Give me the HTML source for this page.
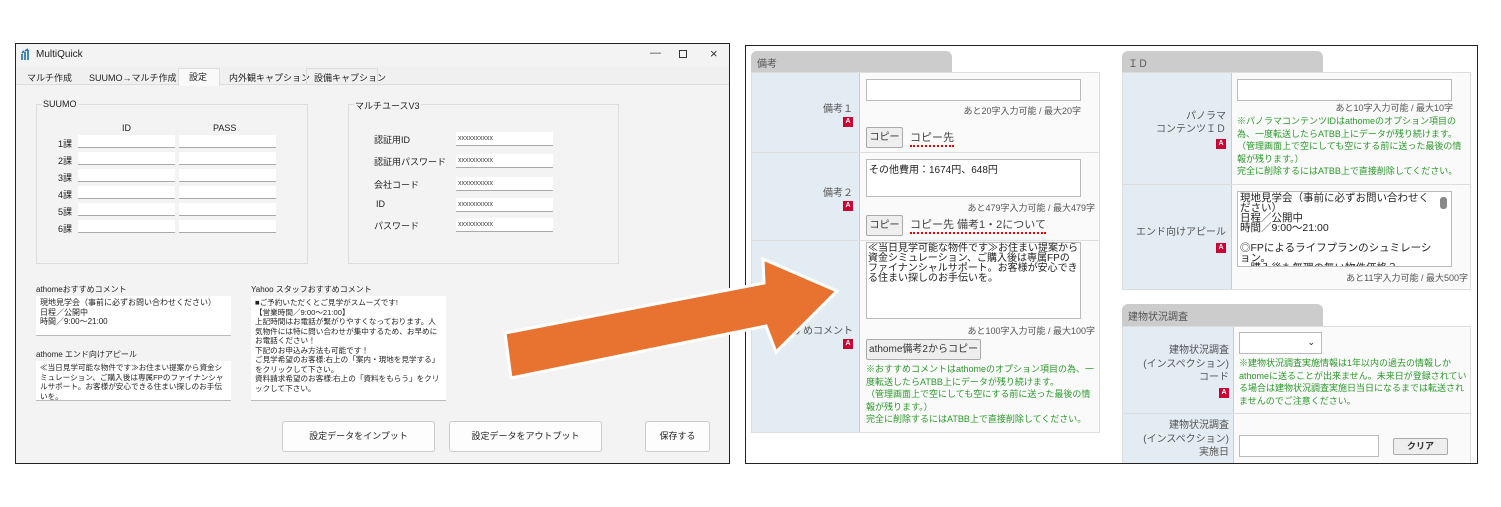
<!DOCTYPE html>
<html><head><meta charset="utf-8"><style>
*{box-sizing:border-box;margin:0;padding:0}
body{width:1501px;height:507px;background:#fff;position:relative;overflow:hidden;font-family:"Liberation Sans","Noto Sans CJK JP",sans-serif;color:#222}
.a{position:absolute}
.win{left:15px;top:43px;width:715px;height:421px;border:1px solid #222;background:#f3f3f3}
.s{font-size:9px;white-space:nowrap}
.inp{position:absolute;background:#fff;border-bottom:1px solid #aaa;height:13px}
.grp{position:absolute;border:1px solid #ddd}
.lg{position:absolute;top:-6px;left:5px;background:#f3f3f3;font-size:9px;padding:0 1px}
.btn{position:absolute;background:#fdfdfd;border:1px solid #ccc;border-radius:3px;font-size:9px;text-align:center}
.ta{position:absolute;background:#fff;border-bottom:1px solid #bbb;font-size:8px;line-height:9.5px;padding:2px 4px;overflow:hidden}
.br{left:745px;top:45px;width:733px;height:419px;border:1px solid #222;background:#fff;overflow:hidden}
.tab{position:absolute;background:#ccc;border-radius:6px 6px 0 0;font-size:10px;color:#555;padding:4px 6px}
.tb{position:absolute;border:1px solid #ddd;background:#fafafa}
.lab{position:absolute;background:#e3ecf2;border-right:1px solid #ccc;font-size:10px;color:#555;text-align:right}
.row{position:absolute;left:0;right:0;border-bottom:1px solid #ddd}
.A{display:inline-block;width:10px;height:10px;background:#cc0033;color:#fff;font-size:7px;font-weight:bold;text-align:center;line-height:10px}
.g{color:#2a9a2a;font-size:9px;line-height:12.5px}
.c{font-size:9px;color:#555;text-align:right}
.wb{position:absolute;background:#fff;border:1px solid #bbb}
.gb{position:absolute;background:#eee;border:1px solid #aaa;font-size:10px;color:#333;text-align:center;border-radius:2px}
</style></head><body>
<div class="a win">
 <div class="a" style="left:0;top:0;width:713px;height:22px;background:#f3f3f3"></div>
 <svg class="a" style="left:4px;top:4px" width="13" height="13"><path d="M2 12V6M5 12V4M8 12V2M2 5L4 3M5 3L8 1" stroke="#1a6bb3" stroke-width="1.6" fill="none"/></svg>
 <div class="a s" style="left:20px;top:5px;font-size:10px">MultiQuick</div>
 <div class="a s" style="left:634px;top:3px;font-size:11px;color:#444">—</div>
 <div class="a" style="left:663px;top:6px;width:8px;height:8px;border:1px solid #333"></div>
 <div class="a s" style="left:694px;top:2px;font-size:13px;color:#333">×</div>
 <div class="a" style="left:0;top:22px;width:713px;height:19px;background:#f0f0f0;border-bottom:1px solid #ddd"></div>
 <div class="a s" style="left:11px;top:27px">マルチ作成</div>
 <div class="a s" style="left:73px;top:27px">SUUMO→マルチ作成</div>
 <div class="a" style="left:162px;top:24px;width:42px;height:18px;background:#f9f9f9;border:1px solid #ddd;border-bottom:none"></div>
 <div class="a s" style="left:173px;top:26px">設定</div>
 <div class="a s" style="left:213px;top:27px">内外観キャプション</div>
 <div class="a" style="left:290px;top:24px;width:72px;height:17px;border:1px solid #ddd;border-bottom:none"></div>
 <div class="a s" style="left:298px;top:27px">設備キャプション</div>

 <div class="grp" style="left:20px;top:60px;width:272px;height:160px"><span class="lg">SUUMO</span></div>
 <div class="a s" style="left:106px;top:79px">ID</div>
 <div class="a s" style="left:197px;top:79px">PASS</div>
 <div class="a s" style="left:42px;top:92px;line-height:17px">1課<br>2課<br>3課<br>4課<br>5課<br>6課</div>
 <div class="inp" style="left:62px;top:91px;width:97px"></div><div class="inp" style="left:163px;top:91px;width:97px"></div>
 <div class="inp" style="left:62px;top:108px;width:97px"></div><div class="inp" style="left:163px;top:108px;width:97px"></div>
 <div class="inp" style="left:62px;top:125px;width:97px"></div><div class="inp" style="left:163px;top:125px;width:97px"></div>
 <div class="inp" style="left:62px;top:142px;width:97px"></div><div class="inp" style="left:163px;top:142px;width:97px"></div>
 <div class="inp" style="left:62px;top:159px;width:97px"></div><div class="inp" style="left:163px;top:159px;width:97px"></div>
 <div class="inp" style="left:62px;top:176px;width:97px"></div><div class="inp" style="left:163px;top:176px;width:97px"></div>

 <div class="grp" style="left:332px;top:60px;width:271px;height:160px"><span class="lg">マルチユースV3</span></div>
 <div class="a s" style="left:358px;top:89px">認証用ID</div>
 <div class="a s" style="left:358px;top:111px">認証用パスワード</div>
 <div class="a s" style="left:358px;top:134px">会社コード</div>
 <div class="a s" style="left:360px;top:155px">ID</div>
 <div class="a s" style="left:358px;top:175px">パスワード</div>
 <div class="inp s" style="left:440px;top:88px;width:97px;height:14px;font-size:7px;padding:3px 2px;color:#444">xxxxxxxxxx</div>
 <div class="inp s" style="left:440px;top:110px;width:97px;height:14px;font-size:7px;padding:3px 2px;color:#444">xxxxxxxxxx</div>
 <div class="inp s" style="left:440px;top:133px;width:97px;height:14px;font-size:7px;padding:3px 2px;color:#444">xxxxxxxxxx</div>
 <div class="inp s" style="left:440px;top:154px;width:97px;height:14px;font-size:7px;padding:3px 2px;color:#444">xxxxxxxxxx</div>
 <div class="inp s" style="left:440px;top:174px;width:97px;height:14px;font-size:7px;padding:3px 2px;color:#444">xxxxxxxxxx</div>

 <div class="a s" style="left:20px;top:240px;font-size:8px">athomeおすすめコメント</div>
 <div class="ta" style="left:20px;top:252px;width:195px;height:40px">現地見学会（事前に必ずお問い合わせください）<br>日程／公開中<br>時間／9:00〜21:00</div>
 <div class="a s" style="left:20px;top:305px;font-size:8px">athome エンド向けアピール</div>
 <div class="ta" style="left:20px;top:317px;width:195px;height:40px;font-size:7.6px">≪当日見学可能な物件です≫お住まい提案から資金シミュレーション、ご購入後は専属FPのファイナンシャルサポート。お客様が安心できる住まい探しのお手伝いを。</div>
 <div class="a s" style="left:235px;top:240px;font-size:8px">Yahoo スタッフおすすめコメント</div>
 <div class="ta" style="left:235px;top:252px;width:195px;height:105px;font-size:7.6px">■ご予約いただくとご見学がスムーズです!<br>【営業時間／9:00〜21:00】<br>上記時間はお電話が繋がりやすくなっております。人気物件には特に問い合わせが集中するため、お早めにお電話ください！<br>下記のお申込み方法も可能です！<br>ご見学希望のお客様:右上の「案内・現地を見学する」をクリックして下さい。<br>資料請求希望のお客様:右上の「資料をもらう」をクリックして下さい。</div>
 <div class="btn" style="left:266px;top:377px;width:153px;height:31px;line-height:29px">設定データをインプット</div>
 <div class="btn" style="left:433px;top:377px;width:153px;height:31px;line-height:29px">設定データをアウトプット</div>
 <div class="btn" style="left:629px;top:377px;width:65px;height:31px;line-height:29px">保存する</div>
</div>

<div class="a br">
 <div class="tab" style="left:5px;top:5px;width:201px;height:21px">備考</div>
 <div class="tb" style="left:5px;top:26px;width:349px;height:361px">
  <div class="lab" style="left:0;top:0;width:108px;height:359px"></div>
  <div class="row" style="top:0;height:80px"></div>
  <div class="row" style="top:80px;height:88px"></div>
  <div class="a" style="left:0;top:27px;width:101px;text-align:right;font-size:10px;color:#555">備考１<br><span class="A">A</span></div>
  <div class="a" style="left:0;top:111px;width:101px;text-align:right;font-size:10px;color:#555">備考２<br><span class="A">A</span></div>
  <div class="a" style="left:0;top:249px;width:101px;text-align:right;font-size:10px;color:#555">すめコメント<br><span class="A">A</span></div>
  <div class="wb" style="left:114px;top:6px;width:215px;height:22px"></div>
  <div class="a c" style="left:114px;top:31px;width:215px">あと20字入力可能 / 最大20字</div>
  <div class="gb" style="left:114px;top:54px;width:37px;height:21px;line-height:19px">コピー</div>
  <div class="a s" style="left:158px;top:56px;font-size:11px;color:#444;border-bottom:2px dotted #e00">コピー先</div>
  <div class="wb" style="left:114px;top:86px;width:215px;height:38px;font-size:10px;padding:1px 2px">その他費用：1674円、648円</div>
  <div class="a c" style="left:114px;top:128px;width:229px">あと479字入力可能 / 最大479字</div>
  <div class="gb" style="left:114px;top:142px;width:37px;height:21px;line-height:19px">コピー</div>
  <div class="a s" style="left:158px;top:143px;font-size:11px;color:#444;border-bottom:2px dotted #e00">コピー先 備考1・2について</div>
  <div class="wb" style="left:114px;top:169px;width:215px;height:77px;font-size:10px;line-height:10px;padding:1px 1px;color:#222">≪当日見学可能な物件です≫お住まい提案から資金シミュレーション、ご購入後は専属FPのファイナンシャルサポート。お客様が安心できる住まい探しのお手伝いを。</div>
  <div class="a c" style="left:114px;top:251px;width:229px">あと100字入力可能 / 最大100字</div>
  <div class="gb" style="left:114px;top:266px;width:115px;height:21px;line-height:19px">athome備考2からコピー</div>
  <div class="a g" style="left:114px;top:290px;width:230px">※おすすめコメントはathomeのオプション項目の為、一度転送したらATBB上にデータが残り続けます。<br>（管理画面上で空にしても空にする前に送った最後の情報が残ります。）<br>完全に削除するにはATBB上で直接削除してください。</div>
 </div>

 <div class="tab" style="left:376px;top:5px;width:201px;height:21px">ＩＤ</div>
 <div class="tb" style="left:376px;top:26px;width:349px;height:218px">
  <div class="lab" style="left:0;top:0;width:109px;height:216px"></div>
  <div class="row" style="top:0;height:112px"></div>
  <div class="a" style="left:0;top:37px;width:103px;text-align:right;font-size:10px;color:#555;line-height:13px">パノラマ<br>コンテンツＩＤ<br><span class="A">A</span></div>
  <div class="a" style="left:0;top:153px;width:103px;text-align:right;font-size:10px;color:#555;line-height:14px">エンド向けアピール<br><span class="A">A</span></div>
  <div class="wb" style="left:114px;top:6px;width:215px;height:22px"></div>
  <div class="a c" style="left:114px;top:28px;width:216px">あと10字入力可能 / 最大10字</div>
  <div class="a g" style="left:114px;top:42px;width:230px">※パノラマコンテンツIDはathomeのオプション項目の為、一度転送したらATBB上にデータが残り続けます。<br>（管理画面上で空にしても空にする前に送った最後の情報が残ります。）<br>完全に削除するにはATBB上で直接削除してください。</div>
  <div class="wb" style="left:114px;top:118px;width:215px;height:76px;font-size:10.5px;line-height:10px;padding:1px 14px 1px 2px;overflow:hidden;color:#222">現地見学会（事前に必ずお問い合わせください）<br>日程／公開中<br>時間／9:00〜21:00<br><br>◎FPによるライフプランのシュミレーション。<br>・購入後も無理の無い物件価格？</div>
  <div class="a" style="left:317px;top:124px;width:7px;height:12px;background:#888;border-radius:3px"></div>
  <div class="a c" style="left:114px;top:198px;width:231px">あと11字入力可能 / 最大500字</div>
 </div>

 <div class="tab" style="left:376px;top:258px;width:201px;height:22px">建物状況調査</div>
 <div class="tb" style="left:376px;top:280px;width:349px;height:140px">
  <div class="lab" style="left:0;top:0;width:111px;height:140px"></div>
  <div class="row" style="top:0;height:87px"></div>
  <div class="a" style="left:0;top:17px;width:106px;text-align:right;font-size:10px;color:#555;line-height:13.5px">建物状況調査<br>(インスペクション)<br>コード<br><span class="A">A</span></div>
  <div class="a" style="left:0;top:92px;width:106px;text-align:right;font-size:10px;color:#555;line-height:13.5px">建物状況調査<br>(インスペクション)<br>実施日</div>
  <div class="wb" style="left:116px;top:5px;width:83px;height:22px;font-size:9px;text-align:right;padding:4px 6px">⌄</div>
  <div class="a g" style="left:116px;top:30px;width:230px">※建物状況調査実施情報は1年以内の過去の情報しかathomeに送ることが出来ません。未来日が登録されている場合は建物状況調査実施日当日になるまでは転送されませんのでご注意ください。</div>
  <div class="wb" style="left:116px;top:108px;width:140px;height:22px"></div>
  <div class="gb" style="left:270px;top:111px;width:55px;height:17px;line-height:15px;font-size:9px;font-weight:bold">クリア</div>
 </div>
</div>

<svg class="a" style="left:0;top:0" width="1501" height="507">
 <polygon points="505,333 764,283 763,259 837,291 776,352 766,326 511,378" fill="#e87330" stroke="#fff" stroke-width="3" stroke-linejoin="miter"/>
</svg>
</body></html>
